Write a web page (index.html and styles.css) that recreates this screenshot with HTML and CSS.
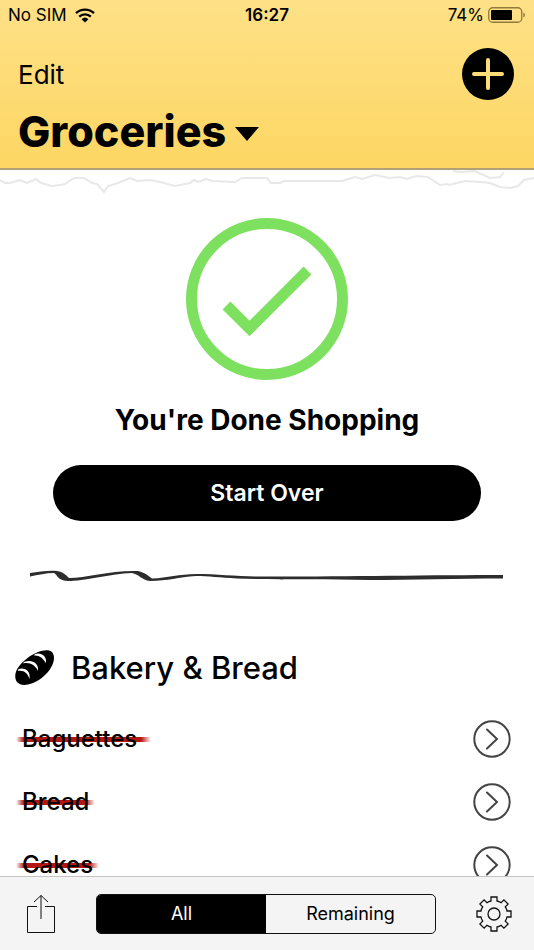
FILE: index.html
```html
<!DOCTYPE html>
<html lang="en">
<head>
  <meta charset="UTF-8">
  <meta name="viewport" content="width=device-width, initial-scale=1">
  <title>Groceries</title>
  <link rel="stylesheet" href="styles.css">
</head>
<body>

  <header class="header">
    <div class="status">
      <div class="status-left">
        <span>No SIM</span>
        <svg class="wifi" viewBox="0 0 20 15" aria-hidden="true">
          <path d="M1 5.2a13 13 0 0 1 18 0M4.2 8.7a8.5 8.5 0 0 1 11.6 0" fill="none" stroke="#000" stroke-width="2.4"/>
          <path d="M6.6 11.2a5 5 0 0 1 6.8 0L10 14.6z"/>
        </svg>
      </div>
      <strong class="clock">16:27</strong>
      <div class="status-right">
        <span>74%</span>
        <svg class="battery" viewBox="0 0 38 16" aria-hidden="true">
          <rect x=".75" y=".75" width="33" height="14.5" rx="4" fill="none" stroke="#8f7a3c" stroke-width="1.3"/>
          <rect x="3" y="3" width="21" height="10" rx="1"/>
          <path d="M35.5 5.5a3 3 0 0 1 0 5z" fill="#6f5e2d"/>
        </svg>
      </div>
    </div>
    <div class="toolbar">
      <button class="edit">Edit</button>
      <button class="add" aria-label="Add item">
        <svg viewBox="0 0 52 52">
          <circle cx="26" cy="26" r="26"/>
          <path d="M26 12v28M12 26h28" stroke="#fedc77" stroke-width="4" stroke-linecap="round"/>
        </svg>
      </button>
    </div>
    <h1 class="title">
      <button class="list-picker">
        Groceries
        <svg class="caret" viewBox="0 0 24 14" aria-hidden="true"><path d="M0 0h24L12 14z"/></svg>
      </button>
    </h1>
  </header>

  <main class="content">
    <svg class="torn" viewBox="0 0 534 25" preserveAspectRatio="none" aria-hidden="true">
      <path d="M0 10l5 3h5l10-3 7 3 9-4 5 4 11 3 8-1 5-1 9-6h10l8 5 5 1 7 8 4-6 10-3 12-5 7 3 13-1 10 2 15 4 15-3 4-3 4 2 8-3 6 2 23 1 7-4h25l4 5h9l4-2h46l12 0 13-4 7 2 13-4 15 3 10-1 7 2 9-3 12 1 12 8 7-1 2 1 16-4 15 1 10 1 10 4 10 1 8-2 6-6 10-2"/>
      <path d="M453 1l7 1 15-1 15 7 10-1 4-5"/>
    </svg>

    <section class="done">
      <svg class="check" viewBox="0 0 162 162" aria-hidden="true">
        <circle cx="81" cy="81" r="75.5"/>
        <path d="M40.5 87.5L63.500 110.500 121.500 52.500"/>
      </svg>
      <h2 class="done-title">You're Done Shopping</h2>
      <button class="start-over">Start Over</button>
    </section>

    <svg class="divider" viewBox="0 0 474 14" preserveAspectRatio="none" aria-hidden="true">
      <path d="M0 4C9 3 18 1 27 2C33 3 36 6 39 9C56 9 82 1 108 2C116 4 118 7 122 9.500C138 9 149 5 166 5C188 5 207 7.500 230 7.500C285 8 400 6 473 6V9.500C430 9.500 380 11 340 11C290 10 240 11 207 9.500C190 8.500 178 7 166 7C148 8 138 12 120 12C111 11 111 6 102 4C80 5 60 11 40 12C27 12 28 6 24 4C16 4 8 6 0 7.500Z"/>
    </svg>

    <section class="category">
      <h2 class="category-title">
        <svg class="bread" viewBox="0 0 40 36" aria-hidden="true">
          <path d="M2 32C-2 26 1 18 9 11C17 3 32-3 37 2C42 8 37 19 29 26C20 34 7 38 2 32Z"/>
          <path class="cuts" d="M3.500 19C10 17 16 21 14.500 29C12.500 23 9 20 3 21ZM9 12C17 9 24 13 23 21C20 15 15 12 8 13.500ZM20 4C26 2 32 6 31 13C28 8 24 5 19 5.500Z"/>
        </svg>
        Bakery &amp; Bread
      </h2>
      <ul class="items">
        <li class="item">
          <span class="crossed">Baguettes</span>
          <button class="details" aria-label="Baguettes details">
            <svg viewBox="0 0 38 38"><circle cx="19" cy="19" r="17.7"/><path d="M14 9.5L24 19 14 28.5"/></svg>
          </button>
        </li>
        <li class="item">
          <span class="crossed">Bread</span>
          <button class="details" aria-label="Bread details">
            <svg viewBox="0 0 38 38"><circle cx="19" cy="19" r="17.7"/><path d="M14 9.5L24 19 14 28.5"/></svg>
          </button>
        </li>
        <li class="item">
          <span class="crossed">Cakes</span>
          <button class="details" aria-label="Cakes details">
            <svg viewBox="0 0 38 38"><circle cx="19" cy="19" r="17.7"/><path d="M14 9.5L24 19 14 28.5"/></svg>
          </button>
        </li>
      </ul>
    </section>
  </main>

  <footer class="bottom-bar">
    <button class="bar-button" aria-label="Share">
      <svg class="share" viewBox="0 0 30 40">
        <path d="M11 12.500H1.500V38.500h27v-26H19M15 25V1.500M8 8l7-6.500L22 8"/>
      </svg>
    </button>
    <div class="segments" role="radiogroup" aria-label="Show items">
      <input type="radio" name="show" id="show-all" checked>
      <label for="show-all">All</label>
      <input type="radio" name="show" id="show-remaining">
      <label for="show-remaining">Remaining</label>
    </div>
    <button class="bar-button" aria-label="Settings">
      <svg class="gear" viewBox="-18 -18 36 36">
        <path d="M-3-17H3V-13Q5.200-12.600 7.100-11.300L9.900-14.100 14.100-9.900 11.300-7.100Q12.600-5.200 13-3H17V3H13Q12.600 5.200 11.300 7.100L14.100 9.900 9.900 14.100 7.100 11.300Q5.200 12.600 3 13V17H-3V13Q-5.200 12.600-7.100 11.300L-9.900 14.100-14.100 9.900-11.300 7.100Q-12.600 5.200-13 3H-17V-3H-13Q-12.600-5.200-11.300-7.100L-14.100-9.900-9.900-14.100-7.100-11.300Q-5.200-12.600-3-13Z"/>
        <circle r="6"/>
      </svg>
    </button>
  </footer>

</body>
</html>
```
FILE: styles.css
```css
* {
  box-sizing: border-box;
}

body {
  margin: 0;
  height: 100vh;
  display: flex;
  flex-direction: column;
  font-family: Inter, "Liberation Sans", sans-serif;
  color: #000;
  background: #fff;
}

button {
  padding: 0;
  border: none;
  background: none;
  font: inherit;
  color: inherit;
  cursor: pointer;
}

svg {
  display: block;
}

h1, h2, ul {
  margin: 0;
  padding: 0;
}

/* header */
.header {
  flex: none;
  padding-bottom: 12px;
  background: linear-gradient(#fee187, #fdd663);
  border-bottom: 2px solid #b39f78;
}

.status {
  display: grid;
  grid-template-columns: 1fr auto 1fr;
  align-items: center;
  height: 30px;
  padding: 0 8px;
  font-size: 17px;
}

.status-left,
.status-right {
  display: flex;
  align-items: center;
  gap: 8px;
}

.status-right {
  justify-content: flex-end;
  gap: 4px;
}

.wifi {
  width: 20px;
  height: 15px;
}

.clock {
  font-weight: 600;
}

.battery {
  width: 38px;
  height: 16px;
}

.toolbar {
  display: flex;
  justify-content: space-between;
  align-items: center;
  padding: 18px 20px 0 18px;
}

.edit {
  font-size: 26px;
}

.add svg {
  width: 52px;
  height: 52px;
}

.title {
  padding: 6px 18px 0;
  font-size: 43px;
  font-weight: 800;
  line-height: 50px;
}

.list-picker {
  display: flex;
  align-items: center;
  gap: 9px;
}

.caret {
  width: 24px;
  height: 14px;
  margin-top: 6px;
}

/* list */
.content {
  flex: 1;
  min-height: 0;
  overflow-y: auto;
  scrollbar-width: none;
}

.torn {
  width: 100%;
  height: 25px;
  fill: none;
  stroke: #e8e8e8;
  stroke-width: 2;
}

.done {
  display: flex;
  flex-direction: column;
  align-items: center;
  padding-top: 23px;
}

.check {
  width: 162px;
  height: 162px;
  fill: none;
  stroke: #7ee05f;
  stroke-width: 11;
}

.done-title {
  margin-top: 22px;
  font-size: 28px;
  font-weight: 700;
  line-height: 36px;
}

.start-over {
  width: 80%;
  height: 56px;
  margin-top: 27px;
  border-radius: 28px;
  background: #000;
  color: #fff;
  font-size: 23px;
  font-weight: 600;
}

.divider {
  width: calc(100% - 60px);
  height: 14px;
  margin: 48px 30px 0;
  fill: #2d2d2d;
}

.category-title {
  display: flex;
  align-items: center;
  gap: 16px;
  margin-top: 63px;
  padding: 0 15px;
  font-size: 31px;
  font-weight: 500;
  line-height: 44px;
}

.bread {
  width: 40px;
  height: 36px;
}

.cuts {
  fill: #fff;
}

.items {
  margin-top: 17px;
  list-style: none;
}

.item {
  display: flex;
  justify-content: space-between;
  align-items: center;
  height: 63px;
  padding: 0 23px 0 22px;
  font-size: 24px;
  font-weight: 500;
}

.crossed {
  position: relative;
  z-index: 0;
}

.crossed::before {
  content: "";
  position: absolute;
  z-index: -1;
  top: calc(50% - 2px);
  left: -6px;
  width: 117%;
  height: 5px;
  border-radius: 2px;
  background: linear-gradient(90deg, transparent, #b5160f 8px, #b5160f calc(100% - 10px), transparent);
}

.details svg {
  width: 38px;
  height: 38px;
  fill: none;
  stroke: #444;
  stroke-width: 2;
  stroke-linecap: round;
}

/* bottom bar */
.bottom-bar {
  flex: none;
  display: flex;
  gap: 40px;
  align-items: center;
  height: 74px;
  padding: 0 22px 0 26px;
  background: #f4f4f4;
  border-top: 1px solid #c4c4c4;
}

.bar-button svg {
  fill: none;
  stroke: #111;
}

.share {
  width: 30px;
  height: 40px;
}

.bar-button .gear {
  width: 36px;
  height: 36px;
  stroke-width: 1.3;
}

.segments {
  flex: 1;
  display: flex;
  height: 40px;
  border: 1px solid #111;
  border-radius: 5px;
  overflow: hidden;
}

.segments input {
  position: absolute;
  opacity: 0;
}

.segments label {
  flex: 1;
  display: flex;
  align-items: center;
  justify-content: center;
  font-size: 18px;
  cursor: pointer;
}

.segments input:checked + label {
  background: #000;
  color: #fff;
}
```
